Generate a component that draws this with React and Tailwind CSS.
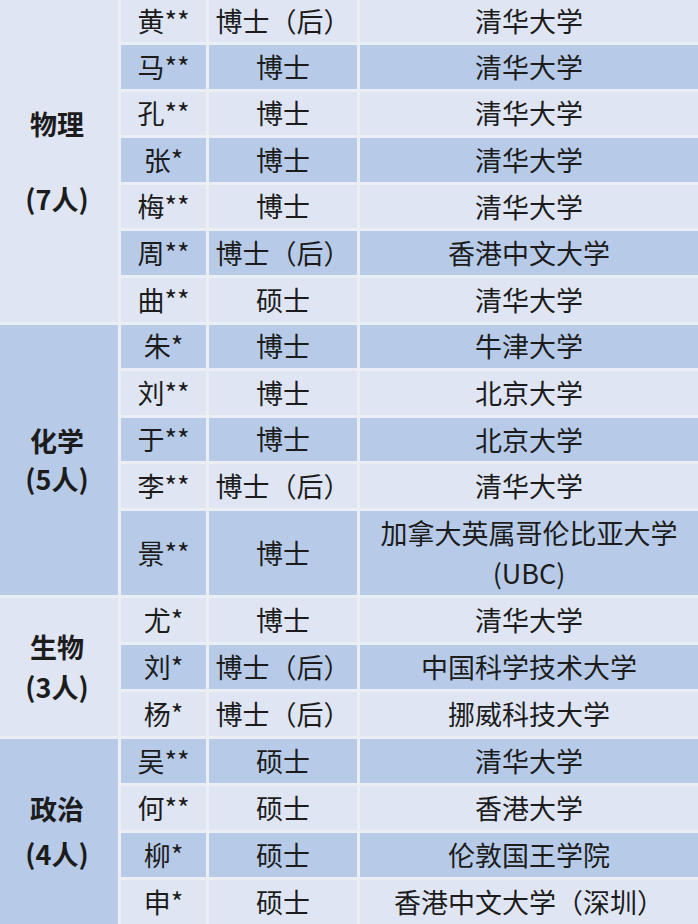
import React from "react";

const LIGHT = "bg-[#dfe5f3]";
const DARK = "bg-[#b7cbe8]";

const groups = [
  {
    name: ["物理", "(7人)"],
    span: "row-span-7",
    bg: LIGHT,
    lead: "leading-[75px]",
    rows: [
      ["黄**", "博士（后）", "清华大学"],
      ["马**", "博士", "清华大学"],
      ["孔**", "博士", "清华大学"],
      ["张*", "博士", "清华大学"],
      ["梅**", "博士", "清华大学"],
      ["周**", "博士（后）", "香港中文大学"],
      ["曲**", "硕士", "清华大学"],
    ],
  },
  {
    name: ["化学", "(5人)"],
    span: "row-span-5",
    bg: DARK,
    lead: "leading-[38px]",
    rows: [
      ["朱*", "博士", "牛津大学"],
      ["刘**", "博士", "北京大学"],
      ["于**", "博士", "北京大学"],
      ["李**", "博士（后）", "清华大学"],
      ["景**", "博士", ["加拿大英属哥伦比亚大学", "(UBC)"]],
    ],
  },
  {
    name: ["生物", "(3人)"],
    span: "row-span-3",
    bg: LIGHT,
    lead: "leading-[40px]",
    rows: [
      ["尤*", "博士", "清华大学"],
      ["刘*", "博士（后）", "中国科学技术大学"],
      ["杨*", "博士（后）", "挪威科技大学"],
    ],
  },
  {
    name: ["政治", "(4人)"],
    span: "row-span-4",
    bg: DARK,
    lead: "leading-[45px]",
    rows: [
      ["吴**", "硕士", "清华大学"],
      ["何**", "硕士", "香港大学"],
      ["柳*", "硕士", "伦敦国王学院"],
      ["申*", "硕士", "香港中文大学（深圳）"],
    ],
  },
];

export default function App() {
  let idx = 0;
  const cells = [];
  groups.forEach((g, gi) => {
    g.rows.forEach((r, ri) => {
      const bg = idx % 2 === 0 ? LIGHT : DARK;
      idx++;
      if (ri === 0) {
        cells.push(
          <div
            key={`g${gi}`}
            className={`${g.span} ${g.bg} flex flex-col items-center justify-center font-bold pr-[4px] ${g.lead}`}
          >
            <span>{g.name[0]}</span>
            <span>{g.name[1]}</span>
          </div>
        );
      }
      cells.push(
        <div key={`n${gi}-${ri}`} className={`${bg} flex items-center justify-center`}>
          {r[0]}
        </div>
      );
      cells.push(
        <div key={`d${gi}-${ri}`} className={`${bg} flex items-center justify-center`}>
          {r[1]}
        </div>
      );
      cells.push(
        <div
          key={`u${gi}-${ri}`}
          className={`${bg} flex flex-col items-center justify-center leading-[40px]`}
        >
          {Array.isArray(r[2]) ? r[2].map((t) => <span key={t}>{t}</span>) : r[2]}
        </div>
      );
    });
  });

  return (
    <div
      className="w-[698px] h-[924px] overflow-hidden bg-[#eceef5] text-[#1c1c1c] text-[27px]"
      style={{ fontFamily: '"Noto Sans CJK SC", "Noto Sans", sans-serif' }}
    >
      <div className="grid h-full gap-[3px] grid-cols-[118px_85px_148px_1fr] grid-rows-[42px_repeat(10,43.6px)_84px_repeat(7,44px)]">
        {cells}
      </div>
    </div>
  );
}
